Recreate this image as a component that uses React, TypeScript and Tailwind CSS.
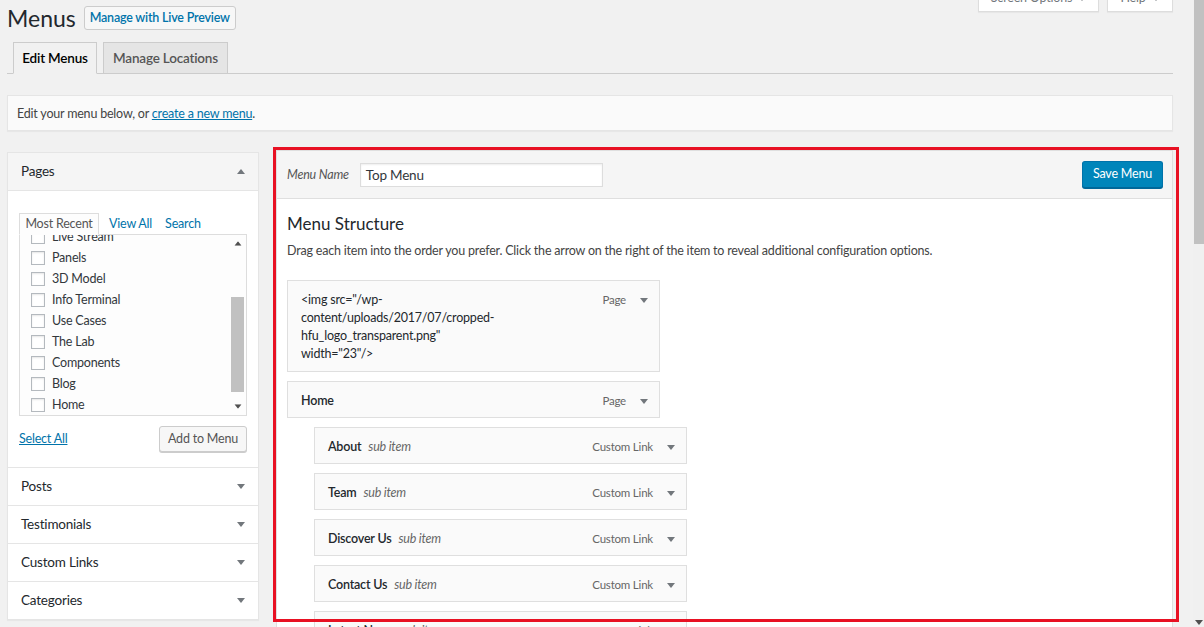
import React from 'react';

const Caret = ({ up = false, className = '' }: { up?: boolean; className?: string }) => (
  <svg width="8" height="5" viewBox="0 0 8 5" className={className}>
    <path d={up ? 'M0 5 L4 0 L8 5 Z' : 'M0 0 L8 0 L4 5 Z'} fill="currentColor" />
  </svg>
);

const pages = ['Live Stream', 'Panels', '3D Model', 'Info Terminal', 'Use Cases', 'The Lab', 'Components', 'Blog', 'Home'];
const sections = ['Posts', 'Testimonials', 'Custom Links', 'Categories'];
const subItems = ['About', 'Team', 'Discover Us', 'Contact Us', 'Latest News'];

function MenuItem({ title, type, sub, className = '' }: { title: React.ReactNode; type: string; sub?: boolean; className?: string }) {
  return (
    <div
      className={`flex items-start justify-between w-[373px] border border-[#dfdfdf] bg-[#fafafa] pl-[13px] pr-[11px] pt-[10px] pb-[7px] leading-[18px] ${
        sub ? 'ml-[27px]' : ''
      } ${className}`}
    >
      <div className="font-semibold text-[#23282d]">
        {title}
        {sub && <span className="ml-[7px] font-normal italic text-[#666]">sub item</span>}
      </div>
      <div className="flex items-center gap-[14px] text-[11.5px] text-[#666]">
        <span>{type}</span>
        <Caret className="text-[#72777c]" />
      </div>
    </div>
  );
}

export default function App() {
  return (
    <div className="flex h-[627px] overflow-hidden bg-[#f1f1f1] font-['Lato',sans-serif] text-[12.5px] tracking-[-0.2px] text-[#444]">
      <div className="flex-1 min-w-0 pl-[7px] pr-[20px]">
        {/* Title row */}
        <div className="flex items-center h-[24px] mt-[6px]">
          <h1 className="text-[23px] leading-[24px] tracking-normal text-[#23282d]">Menus</h1>
          <button className="ml-[8px] flex h-[24px] w-[152px] items-center justify-center whitespace-nowrap rounded-[3px] border border-[#ccc] bg-[#f7f7f7] pt-[1px] font-semibold text-[#0073aa]">
            Manage with Live Preview
          </button>
          <div className="ml-auto flex gap-[8px] self-start -mt-[22px]">
            <div className="flex h-[28px] w-[121px] items-center justify-center gap-[6px] border border-[#ddd] bg-white text-[#72777c] shadow-[0_1px_1px_rgba(0,0,0,0.04)]">
              Screen Options <Caret />
            </div>
            <div className="flex h-[28px] w-[66px] items-center justify-center gap-[6px] border border-[#ddd] bg-white text-[#72777c] shadow-[0_1px_1px_rgba(0,0,0,0.04)]">
              Help <Caret />
            </div>
          </div>
        </div>

        {/* Tabs */}
        <div className="mt-[12px] flex items-end gap-[6px] border-b border-[#ccc] pl-[6px]">
          <div className="-mb-px flex h-[32px] w-[84px] items-center justify-center whitespace-nowrap border border-[#ccc] border-b-[#f1f1f1] bg-[#f1f1f1] pt-[1px] text-[13.5px] font-semibold text-black">
            Edit Menus
          </div>
          <div className="-mb-px flex h-[32px] w-[125px] items-center justify-center whitespace-nowrap border border-[#ccc] bg-[#e5e5e5] pt-[1px] text-[13.5px] font-semibold text-[#555]">
            Manage Locations
          </div>
        </div>

        {/* Notice */}
        <div className="mt-[21px] flex h-[36px] items-center border border-[#e5e5e5] bg-[#fafafa] pl-[9px] pt-[2px] shadow-[0_1px_1px_rgba(0,0,0,0.04)]">
          Edit your menu below, or&nbsp;<span className="text-[#0073aa] underline">create a new menu</span>.
        </div>

        {/* Columns */}
        <div className="mt-[19px] flex items-start">
          {/* Left column */}
          <div className="mt-[2px] w-[252px] border border-[#e5e5e5] bg-white shadow-[0_1px_1px_rgba(0,0,0,0.04)]">
            <div className="flex h-[38px] items-center justify-between border-b border-[#e5e5e5] bg-[#f5f5f5] pl-[13px] pr-[13px] text-[13.5px] text-[#23282d]">
              Pages
              <Caret up className="text-[#72777c]" />
            </div>
            <div className="px-[11px] pt-[22px] pb-[15px]">
              <div className="flex items-center text-[#0073aa]">
                <div className="-mb-px z-10 flex h-[22px] w-[80px] items-center justify-center whitespace-nowrap border border-[#ddd] border-b-[#fdfdfd] bg-[#fdfdfd] pt-[1px] text-[#555]">
                  Most Recent
                </div>
                <span className="ml-[10px] pt-[1px]">View All</span>
                <span className="ml-[13px] pt-[1px]">Search</span>
              </div>
              <div className="flex h-[182px] border border-[#ddd] bg-[#fdfdfd]">
                <div className="flex-1 overflow-hidden">
                  <div className="-mt-[9px]">
                    {pages.map((p) => (
                      <div key={p} className="flex h-[21px] items-center pl-[11px] text-[#32373c]">
                        <span className="h-[14px] w-[14px] border border-[#b4b9be] bg-white shadow-[inset_0_1px_2px_rgba(0,0,0,0.1)]" />
                        <span className="ml-[7px] pt-[1px]">{p}</span>
                      </div>
                    ))}
                  </div>
                </div>
                <div className="flex w-[17px] flex-col items-center">
                  <div className="flex h-[17px] items-center justify-center text-[#505050]">
                    <Caret up className="scale-90" />
                  </div>
                  <div className="flex-1">
                    <div className="mt-[45px] h-[95px] w-[13px] bg-[#c1c1c1]" />
                  </div>
                  <div className="flex h-[17px] items-center justify-center text-[#505050]">
                    <Caret className="scale-90" />
                  </div>
                </div>
              </div>
              <div className="mt-[10px] flex items-center justify-between">
                <span className="text-[#0073aa] underline">Select All</span>
                <button className="flex h-[26px] w-[88px] items-center justify-center whitespace-nowrap rounded-[3px] border border-[#ccc] bg-[#f7f7f7] pt-[1px] text-[#555] shadow-[0_1px_0_#ccc]">
                  Add to Menu
                </button>
              </div>
            </div>
            {sections.map((s) => (
              <div
                key={s}
                className="flex h-[38px] items-center justify-between border-t border-[#e5e5e5] pl-[13px] pr-[13px] text-[13.5px] text-[#23282d]"
              >
                {s}
                <Caret className="text-[#72777c]" />
              </div>
            ))}
          </div>

          {/* Menu editor */}
          <div className="relative ml-[17px] flex-1 min-w-0">
            <div className="border border-[#dfdfdf] bg-white">
              <div className="flex h-[48px] items-center border-b border-[#dfdfdf] bg-[#f5f5f5] pl-[10px] pr-[9px]">
                <span className="pt-[2px] italic text-[#555]">Menu Name</span>
                <div className="ml-[11px] flex h-[24px] w-[243px] items-center border border-[#ddd] bg-white pl-[5px] pt-[2px] text-[13.5px] text-[#32373c] shadow-[inset_0_1px_2px_rgba(0,0,0,0.07)]">
                  Top Menu
                </div>
                <button className="ml-auto flex h-[27px] w-[81px] items-center justify-center whitespace-nowrap rounded-[3px] border border-[#0073aa] border-b-[#006799] bg-[#0085ba] text-white shadow-[0_1px_0_#006799]">
                  Save Menu
                </button>
              </div>
              <div className="pl-[10px] pt-[14px] pb-[20px]">
                <h3 className="text-[17px] leading-[22px] tracking-normal text-[#23282d]">Menu Structure</h3>
                <p className="mt-[7px] leading-[18px]">
                  Drag each item into the order you prefer. Click the arrow on the right of the item to reveal additional configuration options.
                </p>
                <div className="mt-[20px] flex flex-col gap-[9px]">
                  <MenuItem
                    type="Page"
                    className="pb-[8px]"
                    title={
                      <span className="font-normal text-[#23282d]">
                        &lt;img src="/wp-
                        <br />
                        content/uploads/2017/07/cropped-
                        <br />
                        hfu_logo_transparent.png"
                        <br />
                        width="23"/&gt;
                      </span>
                    }
                  />
                  <MenuItem type="Page" title="Home" />
                  {subItems.map((s) => (
                    <MenuItem key={s} sub type="Custom Link" title={s} />
                  ))}
                </div>
              </div>
            </div>
            {/* annotation frame */}
            <div className="pointer-events-none absolute -left-[3px] -top-[3px] -right-[6px] h-[475px] border-[3px] border-[#e81123]" />
          </div>
        </div>
      </div>

      {/* Window scrollbar */}
      <div className="flex w-[11px] flex-col bg-[#f0f0f0]">
        <div className="ml-[1px] h-[244px] bg-[#c1c1c1]" />
        <div className="flex-1" />
        <div className="mb-[2px] flex justify-center text-[#505050]">
          <Caret />
        </div>
      </div>
    </div>
  );
}
